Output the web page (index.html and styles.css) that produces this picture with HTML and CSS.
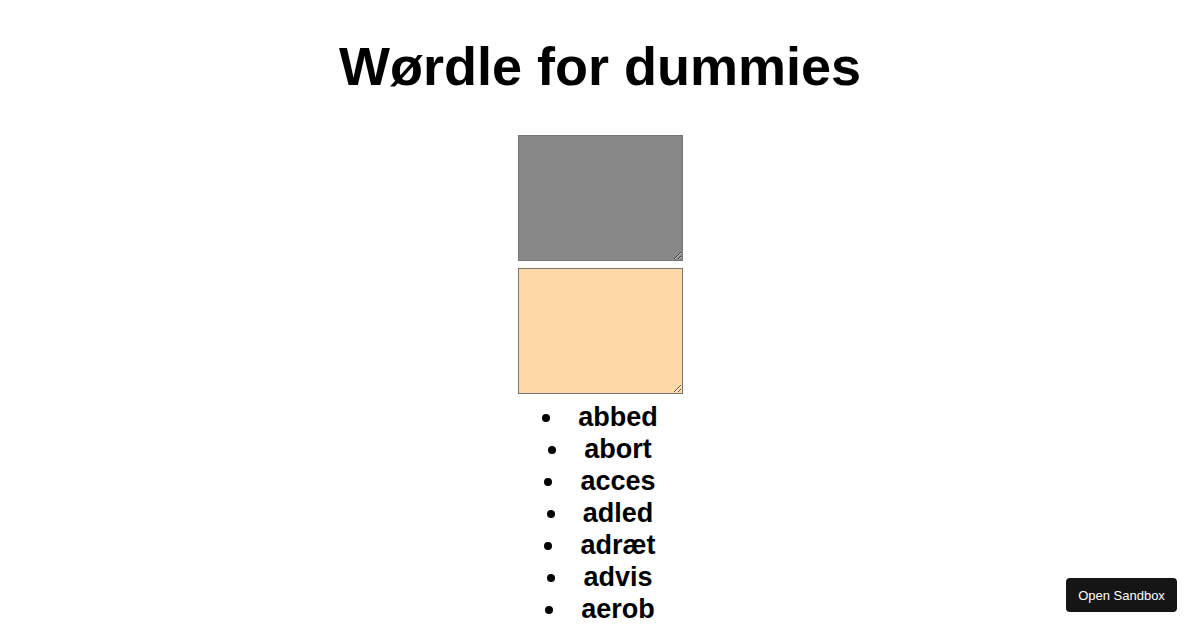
FILE: index.html
```html
<!DOCTYPE html>
<html>
<head>
<meta charset="utf-8">
<link rel="stylesheet" href="styles.css">
</head>
<body>
<div class="app">
  <h1 class="title">Wørdle for dummies</h1>
  <div class="inputs">
    <textarea class="box box-gray"></textarea>
    <textarea class="box box-peach"></textarea>
  </div>
  <ul class="words">
    <li>abbed</li>
    <li>abort</li>
    <li>acces</li>
    <li>adled</li>
    <li>adræt</li>
    <li>advis</li>
    <li>aerob</li>
  </ul>
</div>
<button class="sandbox">Open Sandbox</button>
</body>
</html>
```

FILE: styles.css
```css
html, body {
  margin: 0;
  padding: 0;
  background: #fff;
  overflow: hidden;
}
body {
  font-family: "Liberation Sans", Arial, sans-serif;
  color: #000;
}
.app {
  text-align: center;
  padding-top: 33px;
}
.title {
  font-size: 54px;
  line-height: 67px;
  font-weight: bold;
  margin: 0 0 35px;
}
.inputs {
  display: flex;
  flex-direction: column;
  align-items: center;
  gap: 7px;
}
.box {
  box-sizing: border-box;
  width: 165px;
  height: 126px;
  margin: 0;
  border: 1px solid #767676;
  padding: 2px;
}
.box-gray {
  background: #888888;
}
.box-peach {
  background: #ffd8a8;
}
.words {
  margin: 7px 0 0;
  padding: 0;
  font-size: 27px;
  line-height: 32px;
  font-weight: bold;
  list-style-position: inside;
}
.sandbox {
  position: fixed;
  right: 23px;
  bottom: 18px;
  width: 111px;
  height: 34px;
  background: #151515;
  color: #fff;
  border: none;
  border-radius: 4px;
  font-family: "Liberation Sans", Arial, sans-serif;
  font-size: 13px;
  padding: 0;
}
```
